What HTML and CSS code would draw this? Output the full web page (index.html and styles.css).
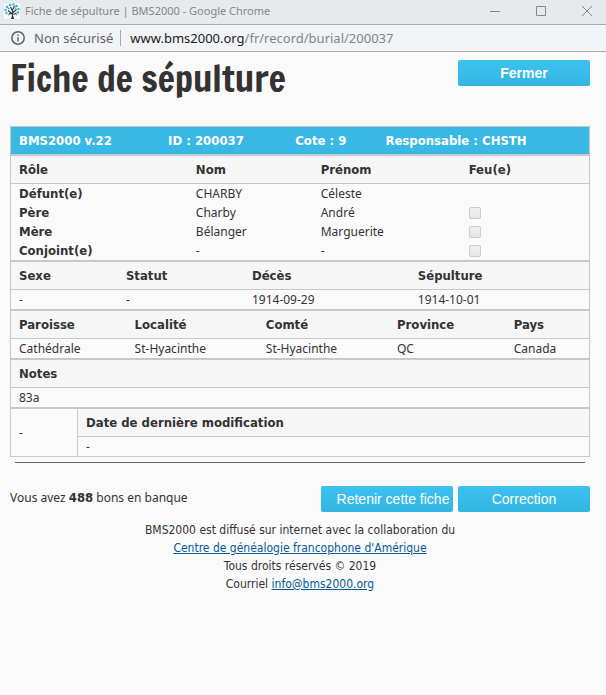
FILE: index.html
```html
<!DOCTYPE html>
<html lang="fr">
<head>
    <meta charset="UTF-8">
    <meta name="viewport" content="width=device-width, initial-scale=1.0">
    <title>Fiche de sépulture | BMS2000</title>
    <link rel="stylesheet" href="styles.css">
</head>
<body>
    <div class="titlebar">
        <svg class="favicon" width="16" height="16" viewBox="0 0 16 16" aria-hidden="true">
            <rect width="16" height="16" fill="#f6fafb"/>
            <path d="M8.5 16V6M8.5 11L4 7.5M8.5 10l4-3.500M8.500 8L6.500 4M8.500 7l2-4M5 10.500l2.500.5M12.500 10l-3 1.500" stroke="#3b3440" stroke-width="1.100" fill="none"/>
            <path d="M7 16l1-3h1.200l1 3z" fill="#3b3440"/>
            <g fill="#3fb4c6">
                <circle cx="3" cy="4" r="1.300"/><circle cx="6" cy="2" r="1.300"/><circle cx="9.500" cy="1.500" r="1.200"/>
                <circle cx="12.500" cy="3" r="1.300"/><circle cx="14.500" cy="6" r="1.200"/><circle cx="1.500" cy="7" r="1.200"/>
                <circle cx="2.500" cy="10" r="1.200"/><circle cx="14" cy="9.500" r="1.200"/><circle cx="4.800" cy="5.500" r="1"/>
                <circle cx="11.500" cy="5.300" r="1"/><circle cx="5" cy="11.500" r=".9"/><circle cx="12.500" cy="11.500" r=".8"/>
            </g>
        </svg>
        <span class="window-title">Fiche de sépulture | BMS2000 - Google Chrome</span>
        <div class="window-controls">
            <button type="button" aria-label="Réduire">
                <svg width="10" height="10" viewBox="0 0 10 10"><path d="M0 5.500h10" stroke="#858789"/></svg>
            </button>
            <button type="button" aria-label="Agrandir">
                <svg width="10" height="10" viewBox="0 0 10 10"><path d="M.5.500h9v9h-9z" stroke="#858789" fill="none"/></svg>
            </button>
            <button type="button" aria-label="Fermer la fenêtre">
                <svg width="10" height="10" viewBox="0 0 10 10"><path d="M0 0l10 10M10 0L0 10" stroke="#858789"/></svg>
            </button>
        </div>
    </div>

    <div class="addressbar">
        <svg width="14" height="14" viewBox="0 0 14 14" aria-hidden="true">
            <circle cx="7" cy="7" r="6.200" stroke="#5f6368" stroke-width="1.500" fill="none"/>
            <path d="M7 6.200v4.300M7 3.500v1.500" stroke="#5f6368" stroke-width="1.500"/>
        </svg>
        <span class="security">Non sécurisé</span>
        <span class="url"><span class="host">www.bms2000.org</span>/fr/record/burial/200037</span>
    </div>

    <main class="page">
        <header class="page-header">
            <h1>Fiche de sépulture</h1>
            <button type="button" class="btn btn-close">Fermer</button>
        </header>

        <table class="record record-id">
            <tr>
                <th>BMS2000 v.22</th>
                <th>ID : 200037</th>
                <th>Cote : 9</th>
                <th>Responsable : CHSTH</th>
            </tr>
        </table>

        <table class="record people">
            <thead>
                <tr><th>Rôle</th><th>Nom</th><th>Prénom</th><th>Feu(e)</th></tr>
            </thead>
            <tbody>
                <tr><th scope="row">Défunt(e)</th><td>CHARBY</td><td>Céleste</td><td></td></tr>
                <tr><th scope="row">Père</th><td>Charby</td><td>André</td><td><input type="checkbox" aria-label="Père feu" disabled></td></tr>
                <tr><th scope="row">Mère</th><td>Bélanger</td><td>Marguerite</td><td><input type="checkbox" aria-label="Mère feue" disabled></td></tr>
                <tr><th scope="row">Conjoint(e)</th><td>-</td><td>-</td><td><input type="checkbox" aria-label="Conjoint(e) feu(e)" disabled></td></tr>
            </tbody>
        </table>

        <table class="record dates">
            <thead>
                <tr><th>Sexe</th><th>Statut</th><th>Décès</th><th>Sépulture</th></tr>
            </thead>
            <tbody>
                <tr><td>-</td><td>-</td><td>1914-09-29</td><td>1914-10-01</td></tr>
            </tbody>
        </table>

        <table class="record places">
            <thead>
                <tr><th>Paroisse</th><th>Localité</th><th>Comté</th><th>Province</th><th>Pays</th></tr>
            </thead>
            <tbody>
                <tr><td>Cathédrale</td><td>St-Hyacinthe</td><td>St-Hyacinthe</td><td>QC</td><td>Canada</td></tr>
            </tbody>
        </table>

        <table class="record">
            <thead>
                <tr><th>Notes</th></tr>
            </thead>
            <tbody>
                <tr><td>83a</td></tr>
            </tbody>
        </table>

        <table class="record changes">
            <tr><td class="change-id" rowspan="2">-</td><th class="change-head">Date de dernière modification</th></tr>
            <tr><td>-</td></tr>
        </table>

        <hr>

        <div class="actions">
            <p>Vous avez <strong>488</strong> bons en banque</p>
            <button type="button" class="btn btn-keep">Retenir cette fiche</button>
            <button type="button" class="btn">Correction</button>
        </div>

        <footer>
            <p>BMS2000 est diffusé sur internet avec la collaboration du</p>
            <p><a href="#">Centre de généalogie francophone d'Amérique</a></p>
            <p>Tous droits réservés © 2019</p>
            <p>Courriel <a href="mailto:info@bms2000.org">info@bms2000.org</a></p>
        </footer>
    </main>
</body>
</html>
```
FILE: styles.css
```css
* {
    box-sizing: border-box;
}

body {
    margin: 0;
    background: #fafafa;
    color: #333;
    font-family: "Noto Sans", sans-serif;
    font-size: 12px;
    line-height: 18px;
}

p {
    margin: 0;
}

/* window frame */
.titlebar {
    display: flex;
    align-items: center;
    height: 25px;
    padding-left: 4px;
    padding-bottom: 3px;
    background: #e7eaed;
    border-bottom: 1px solid #a8aaac;
    color: #858789;
    font-family: "Noto Sans", sans-serif;
    font-size: 11px;
}

.window-title {
    flex: 1;
    margin-left: 5px;
}

.window-controls {
    display: flex;
}

.window-controls button {
    display: flex;
    align-items: center;
    justify-content: center;
    width: 46px;
    height: 21px;
    padding: 0;
    border: 0;
    background: none;
}

.window-controls button:first-child {
    padding-right: 8px;
}

.window-controls button:nth-child(2) {
    padding-right: 8px;
}

.window-controls button:last-child {
    width: 38px;
}

.addressbar {
    display: flex;
    align-items: center;
    height: 27px;
    padding-left: 11px;
    background: #f1f3f4;
    border-bottom: 1px solid #a8aaac;
    color: #5f6368;
    font-family: "Noto Sans", sans-serif;
    font-size: 13px;
}

.security {
    margin-left: 9px;
    padding-right: 7px;
    border-right: 1px solid #a8aaac;
    line-height: 16px;
}

.url {
    margin-left: 9px;
    color: #80868b;
}

.host {
    color: #202124;
}

/* page */
.page {
    padding: 8px 16px 8px 10px;
}

.page-header {
    display: flex;
    justify-content: space-between;
    align-items: flex-start;
    height: 66px;
}

h1 {
    margin: 0;
    font-family: "Francois One", "Roboto Condensed", "Open Sans Condensed", "Liberation Sans", sans-serif;
    font-size: 36px;
    font-weight: normal;
    line-height: 38px;
}

.btn {
    width: 132px;
    height: 26px;
    padding: 0;
    border: 0;
    border-radius: 2px;
    background: linear-gradient(#3cc1f0, #34b5e2);
    color: #fff;
    font-family: "Liberation Sans", Arial, sans-serif;
    font-size: 14px;
    white-space: nowrap;
}

.btn-close {
    font-weight: bold;
}

.btn-keep {
    padding-left: 12px;
}

/* record tables */
.record {
    width: 100%;
    table-layout: fixed;
    border: 1px solid #c8c8c8;
    border-spacing: 0;
}

.record th,
.record td {
    height: 19px;
    padding: 0 8px;
    line-height: 19px;
    text-align: left;
}

.record th,
.actions strong {
    font-family: "DejaVu Sans Condensed", "Noto Sans", sans-serif;
    font-size: 13px;
}

.record thead th,
.record .change-head {
    height: 28px;
    background: #f6f6f6;
    border-bottom: 1px solid #c8c8c8;
}

.record-id th {
    height: 27px;
    background: #37b8e5;
    color: #fff;
}

.record-id th:nth-child(1) { width: 25.8%; }
.record-id th:nth-child(2) { width: 22%; }
.record-id th:nth-child(3) { width: 15.6%; }

.people th:nth-child(1) { width: 30.6%; }
.people th:nth-child(2) { width: 21.6%; }
.people th:nth-child(3) { width: 25.6%; }

.dates th:nth-child(1) { width: 18.5%; }
.dates th:nth-child(2) { width: 21.8%; }
.dates th:nth-child(3) { width: 28.7%; }

.places th:nth-child(1) { width: 20%; }
.places th:nth-child(2) { width: 22.7%; }
.places th:nth-child(3) { width: 22.7%; }
.places th:nth-child(4) { width: 20.2%; }

.record .change-id {
    width: 11.6%;
    border-right: 1px solid #c8c8c8;
}

.people input {
    display: block;
    appearance: none;
    width: 12px;
    height: 12px;
    margin: 0;
    border: 1px solid #ccc;
    border-radius: 2px;
    background: linear-gradient(#f0f0f0, #e6e6e6);
}

hr {
    height: 1px;
    margin: 5px 5px 23px;
    border: 0;
    background: #666;
}

.actions {
    display: flex;
    align-items: center;
    gap: 5px;
}

.actions p {
    flex: 1;
    padding-bottom: 2px;
}

footer {
    margin-top: 9px;
    font-family: "DejaVu Sans Condensed", "Noto Sans", sans-serif;
    text-align: center;
}

a {
    color: #045a94;
}
```
